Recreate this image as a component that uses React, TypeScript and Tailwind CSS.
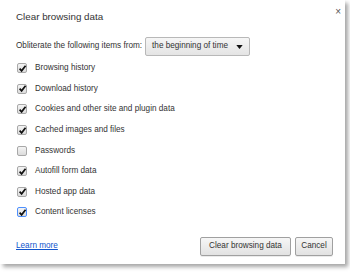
const items = [
  { label: "Browsing history", checked: true },
  { label: "Download history", checked: true },
  { label: "Cookies and other site and plugin data", checked: true },
  { label: "Cached images and files", checked: true },
  { label: "Passwords", checked: false },
  { label: "Autofill form data", checked: true },
  { label: "Hosted app data", checked: true },
  { label: "Content licenses", checked: true, focused: true },
];

function Checkbox({ checked, focused }: { checked: boolean; focused?: boolean }) {
  return (
    <span
      className={`relative flex h-[10px] w-[10px] items-center justify-center rounded-[2px] border bg-gradient-to-b from-[#f4f4f4] to-[#dcdcdc] ${
        focused ? "border-[#4d90fe]" : "border-[#a8a8a8]"
      }`}
    >
      {checked && (
        <svg viewBox="0 0 10 10" className="absolute h-[9px] w-[9px]">
          <path d="M1.8 5.2 L4 7.6 L8.4 2" fill="none" stroke="#111" strokeWidth="1.9" />
        </svg>
      )}
    </span>
  );
}

export default function App() {
  return (
    <div className="h-[272px] w-[350px] bg-white font-['Liberation_Sans',Arial,sans-serif] text-[#333]">
      <div className="relative flex h-[264px] w-[345px] flex-col bg-white shadow-[3px_3px_4px_rgba(0,0,0,0.35)]">
        <button
          type="button"
          className="absolute right-[4px] top-[7px] text-[10px] leading-none text-[#555]"
        >
          ×
        </button>
        <h3 className="pl-4 pt-[11px] text-[9.8px] leading-[12px]">Clear browsing data</h3>

        <div className="mt-[14px] flex items-center pl-4 text-[8.2px]">
          <span>Obliterate the following items from:</span>
          <div className="ml-[3px] flex h-[19px] w-[105px] items-center justify-between rounded-[2px] border border-[#b8b8b8] bg-gradient-to-b from-[#f6f6f6] to-[#e4e4e4] pl-[6px] pr-[6px]">
            <span>the beginning of time</span>
            <svg viewBox="0 0 8 5" className="h-[4px] w-[7px]">
              <path d="M0 0 L8 0 L4 5 Z" fill="#111" />
            </svg>
          </div>
        </div>

        <div className="mt-[2px] flex flex-col pl-[17px] text-[8.2px]">
          {items.map((it) => (
            <label key={it.label} className="flex h-[20.6px] items-center gap-[8px]">
              <Checkbox checked={it.checked} focused={it.focused} />
              <span>{it.label}</span>
            </label>
          ))}
        </div>

        <div className="mt-auto flex items-center justify-between pb-[8px] pl-4 pr-[12px] text-[8.2px]">
          <a href="#" className="text-[#15c] underline">
            Learn more
          </a>
          <div className="flex gap-[4px]">
            <button
              type="button"
              className="h-[19px] w-[91px] rounded-[2px] border border-[#a0a0a0] bg-gradient-to-b from-[#f6f6f6] to-[#e2e2e2] shadow-[0_1px_0_rgba(0,0,0,0.08)]"
            >
              Clear browsing data
            </button>
            <button
              type="button"
              className="h-[19px] w-[38px] rounded-[2px] border border-[#a0a0a0] bg-gradient-to-b from-[#f6f6f6] to-[#e2e2e2] shadow-[0_1px_0_rgba(0,0,0,0.08)]"
            >
              Cancel
            </button>
          </div>
        </div>
      </div>
    </div>
  );
}
